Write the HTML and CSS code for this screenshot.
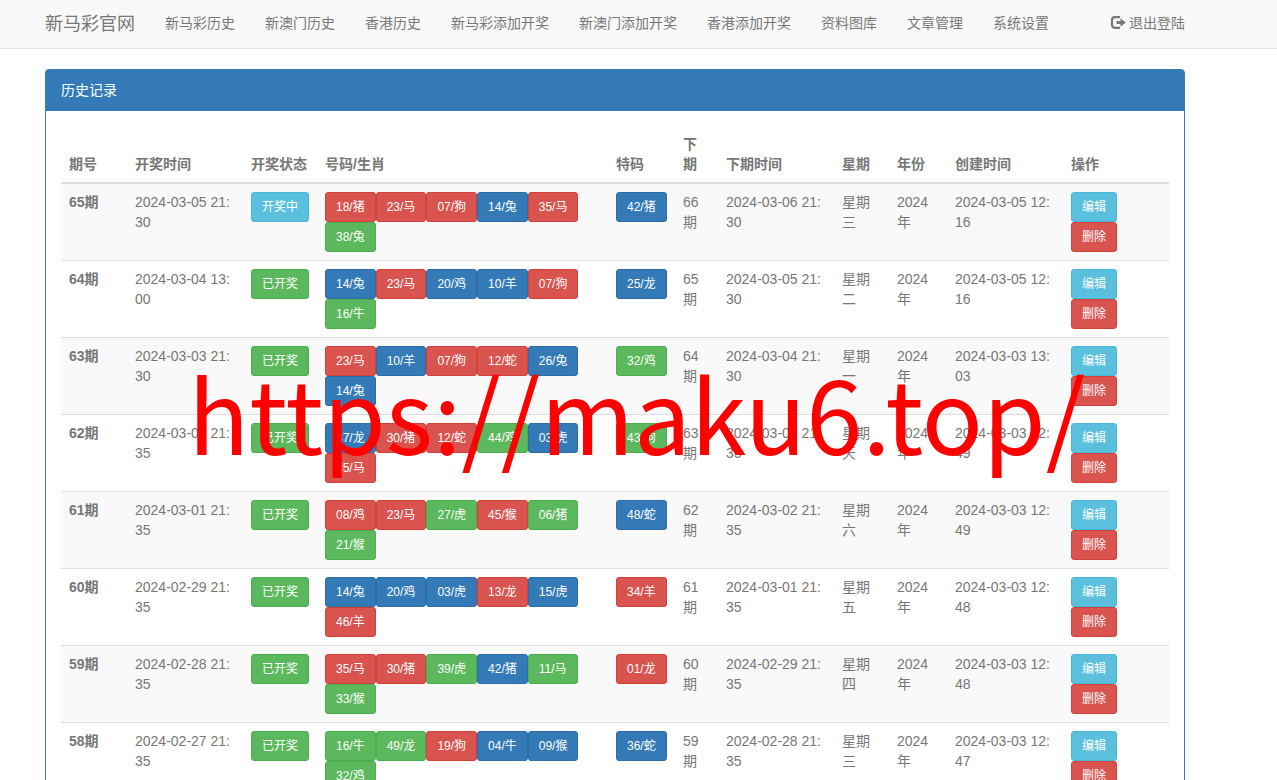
FILE: index.html
```html
<!DOCTYPE html>
<html lang="zh-CN">
<head>
<meta charset="utf-8">
<meta name="viewport" content="width=device-width, initial-scale=1">
<title>历史记录</title>
<link rel="stylesheet" href="styles.css">
</head>
<body>
<nav class="navbar">
  <div class="container navbar-inner">
    <a class="navbar-brand" href="#">新马彩官网</a>
    <ul class="navbar-nav">
      <li><a href="#">新马彩历史</a></li>
      <li><a href="#">新澳门历史</a></li>
      <li><a href="#">香港历史</a></li>
      <li><a href="#">新马彩添加开奖</a></li>
      <li><a href="#">新澳门添加开奖</a></li>
      <li><a href="#">香港添加开奖</a></li>
      <li><a href="#">资料图库</a></li>
      <li><a href="#">文章管理</a></li>
      <li><a href="#">系统设置</a></li>
    </ul>
    <a class="logout" href="#"><svg class="logout-icon" viewBox="0 0 16 14" aria-hidden="true"><path d="M10 1.200H5A3 3 0 0 0 2 4.200v4.600a3 3 0 0 0 3 3H10" fill="none" stroke="currentColor" stroke-width="2.200"/><path d="M10.500 2.300 15.800 6.500 10.500 10.700V8H6.500V5h4z" fill="currentColor"/></svg>退出登陆</a>
  </div>
</nav>
<main class="container">
  <section class="panel">
    <h1 class="panel-heading">历史记录</h1>
    <div class="panel-body">
      <table class="table">
        <colgroup><col class="c-issue"><col class="c-time"><col class="c-status"><col class="c-numbers"><col class="c-special"><col class="c-next"><col class="c-time"><col class="c-week"><col class="c-year"><col class="c-time"><col class="c-actions"></colgroup>
        <thead>
          <tr><th>期号</th><th>开奖时间</th><th>开奖状态</th><th>号码/生肖</th><th>特码</th><th>下<br>期</th><th>下期时间</th><th>星期</th><th>年份</th><th>创建时间</th><th>操作</th></tr>
        </thead>
        <tbody>
          <tr>
            <th scope="row">65期</th><td>2024-03-05 21:30</td>
            <td><div class="group"><button class="btn info">开奖中</button></div></td>
            <td><div class="group"><button class="btn red">18/猪</button><button class="btn red">23/马</button><button class="btn red">07/狗</button><button class="btn blue">14/兔</button><button class="btn red">35/马</button><button class="btn green">38/兔</button></div></td>
            <td><div class="group"><button class="btn blue">42/猪</button></div></td>
            <td>66期</td><td>2024-03-06 21:30</td><td>星期三</td><td>2024年</td><td>2024-03-05 12:16</td>
            <td><div class="group"><button class="btn info">编辑</button><button class="btn red">删除</button></div></td>
          </tr>
          <tr>
            <th scope="row">64期</th><td>2024-03-04 13:00</td>
            <td><div class="group"><button class="btn green">已开奖</button></div></td>
            <td><div class="group"><button class="btn blue">14/兔</button><button class="btn red">23/马</button><button class="btn blue">20/鸡</button><button class="btn blue">10/羊</button><button class="btn red">07/狗</button><button class="btn green">16/牛</button></div></td>
            <td><div class="group"><button class="btn blue">25/龙</button></div></td>
            <td>65期</td><td>2024-03-05 21:30</td><td>星期二</td><td>2024年</td><td>2024-03-05 12:16</td>
            <td><div class="group"><button class="btn info">编辑</button><button class="btn red">删除</button></div></td>
          </tr>
          <tr>
            <th scope="row">63期</th><td>2024-03-03 21:30</td>
            <td><div class="group"><button class="btn green">已开奖</button></div></td>
            <td><div class="group"><button class="btn red">23/马</button><button class="btn blue">10/羊</button><button class="btn red">07/狗</button><button class="btn red">12/蛇</button><button class="btn blue">26/兔</button><button class="btn blue">14/兔</button></div></td>
            <td><div class="group"><button class="btn green">32/鸡</button></div></td>
            <td>64期</td><td>2024-03-04 21:30</td><td>星期一</td><td>2024年</td><td>2024-03-03 13:03</td>
            <td><div class="group"><button class="btn info">编辑</button><button class="btn red">删除</button></div></td>
          </tr>
          <tr>
            <th scope="row">62期</th><td>2024-03-02 21:35</td>
            <td><div class="group"><button class="btn green">已开奖</button></div></td>
            <td><div class="group"><button class="btn blue">37/龙</button><button class="btn red">30/猪</button><button class="btn red">12/蛇</button><button class="btn green">44/鸡</button><button class="btn blue">03/虎</button><button class="btn red">35/马</button></div></td>
            <td><div class="group"><button class="btn green">43/狗</button></div></td>
            <td>63期</td><td>2024-03-03 21:35</td><td>星期天</td><td>2024年</td><td>2024-03-03 12:49</td>
            <td><div class="group"><button class="btn info">编辑</button><button class="btn red">删除</button></div></td>
          </tr>
          <tr>
            <th scope="row">61期</th><td>2024-03-01 21:35</td>
            <td><div class="group"><button class="btn green">已开奖</button></div></td>
            <td><div class="group"><button class="btn red">08/鸡</button><button class="btn red">23/马</button><button class="btn green">27/虎</button><button class="btn red">45/猴</button><button class="btn green">06/猪</button><button class="btn green">21/猴</button></div></td>
            <td><div class="group"><button class="btn blue">48/蛇</button></div></td>
            <td>62期</td><td>2024-03-02 21:35</td><td>星期六</td><td>2024年</td><td>2024-03-03 12:49</td>
            <td><div class="group"><button class="btn info">编辑</button><button class="btn red">删除</button></div></td>
          </tr>
          <tr>
            <th scope="row">60期</th><td>2024-02-29 21:35</td>
            <td><div class="group"><button class="btn green">已开奖</button></div></td>
            <td><div class="group"><button class="btn blue">14/兔</button><button class="btn blue">20/鸡</button><button class="btn blue">03/虎</button><button class="btn red">13/龙</button><button class="btn blue">15/虎</button><button class="btn red">46/羊</button></div></td>
            <td><div class="group"><button class="btn red">34/羊</button></div></td>
            <td>61期</td><td>2024-03-01 21:35</td><td>星期五</td><td>2024年</td><td>2024-03-03 12:48</td>
            <td><div class="group"><button class="btn info">编辑</button><button class="btn red">删除</button></div></td>
          </tr>
          <tr>
            <th scope="row">59期</th><td>2024-02-28 21:35</td>
            <td><div class="group"><button class="btn green">已开奖</button></div></td>
            <td><div class="group"><button class="btn red">35/马</button><button class="btn red">30/猪</button><button class="btn green">39/虎</button><button class="btn blue">42/猪</button><button class="btn green">11/马</button><button class="btn green">33/猴</button></div></td>
            <td><div class="group"><button class="btn red">01/龙</button></div></td>
            <td>60期</td><td>2024-02-29 21:35</td><td>星期四</td><td>2024年</td><td>2024-03-03 12:48</td>
            <td><div class="group"><button class="btn info">编辑</button><button class="btn red">删除</button></div></td>
          </tr>
          <tr>
            <th scope="row">58期</th><td>2024-02-27 21:35</td>
            <td><div class="group"><button class="btn green">已开奖</button></div></td>
            <td><div class="group"><button class="btn green">16/牛</button><button class="btn green">49/龙</button><button class="btn red">19/狗</button><button class="btn blue">04/牛</button><button class="btn blue">09/猴</button><button class="btn green">32/鸡</button></div></td>
            <td><div class="group"><button class="btn blue">36/蛇</button></div></td>
            <td>59期</td><td>2024-02-28 21:35</td><td>星期三</td><td>2024年</td><td>2024-03-03 12:47</td>
            <td><div class="group"><button class="btn info">编辑</button><button class="btn red">删除</button></div></td>
          </tr>
        </tbody>
      </table>
    </div>
  </section>
</main>
<div class="watermark">https://maku6.top/</div>
</body>
</html>
```

FILE: styles.css
```css
*, *::before, *::after { box-sizing: border-box; }

body {
  margin: 0;
  background: #fff;
  color: #777;
  font: 14px/20px "Liberation Sans", "Noto Sans CJK SC", sans-serif;
}

a { color: inherit; text-decoration: none; }

.container {
  max-width: 1170px;
  margin-left: 30px;
  padding: 0 15px;
}

.navbar {
  margin-bottom: 20px;
  background: #f8f8f8;
  border-bottom: 1px solid #e7e7e7;
}
.navbar-inner {
  display: flex;
  align-items: center;
  min-height: 48px;
  white-space: nowrap;
}
.navbar-brand {
  margin-right: 15px;
  font-size: 18px;
}
.navbar-nav {
  display: flex;
  margin: 0;
  padding: 0;
  list-style: none;
}
.navbar-nav a {
  display: block;
  padding: 13px 15px 15px;
}
.logout {
  display: flex;
  align-items: center;
  gap: 3px;
  margin-left: auto;
  padding: 13px 0 15px;
}
.logout-icon { width: 16px; height: 14px; }

.panel {
  margin-bottom: 20px;
  border: 1px solid #337ab7;
  border-radius: 4px;
}
.panel-heading {
  margin: 0;
  padding: 10px 15px 11px;
  background: #337ab7;
  color: #fff;
  font-size: 14px;
  font-weight: 400;
}
.panel-body { padding: 15px; }

.table {
  width: 100%;
  table-layout: fixed;
  border-collapse: collapse;
  word-break: break-all;
}
.table th, .table td {
  padding: 8px;
  border-top: 1px solid #ddd;
  text-align: left;
  vertical-align: top;
}
.table thead th {
  border-top: 0;
  border-bottom: 2px solid #ddd;
  vertical-align: bottom;
}
.table tbody tr:nth-child(odd) { background: #f9f9f9; }

.c-issue { width: 66px; }
.c-time { width: 116px; }
.c-status { width: 74px; }
.c-numbers { width: 291px; }
.c-special { width: 67px; }
.c-next { width: 43px; }
.c-week { width: 55px; }
.c-year { width: 58px; }
.c-actions { width: 106px; }

.group { display: flex; flex-wrap: wrap; }

.btn {
  padding: 5px 10px;
  border: 1px solid;
  border-radius: 3px;
  color: #fff;
  font: inherit;
  font-size: 12px;
  line-height: 18px;
  white-space: nowrap;
  cursor: pointer;
}
.info { background: #5bc0de; border-color: #46b8da; }
.red { background: #d9534f; border-color: #d43f3a; }
.blue { background: #337ab7; border-color: #2e6da4; }
.green { background: #5cb85c; border-color: #4cae4c; }

.watermark {
  position: absolute;
  top: 337px;
  left: 188px;
  color: #f00;
  font: 101px/148px "Noto Sans CJK SC", sans-serif;
  white-space: nowrap;
  pointer-events: none;
}
```
